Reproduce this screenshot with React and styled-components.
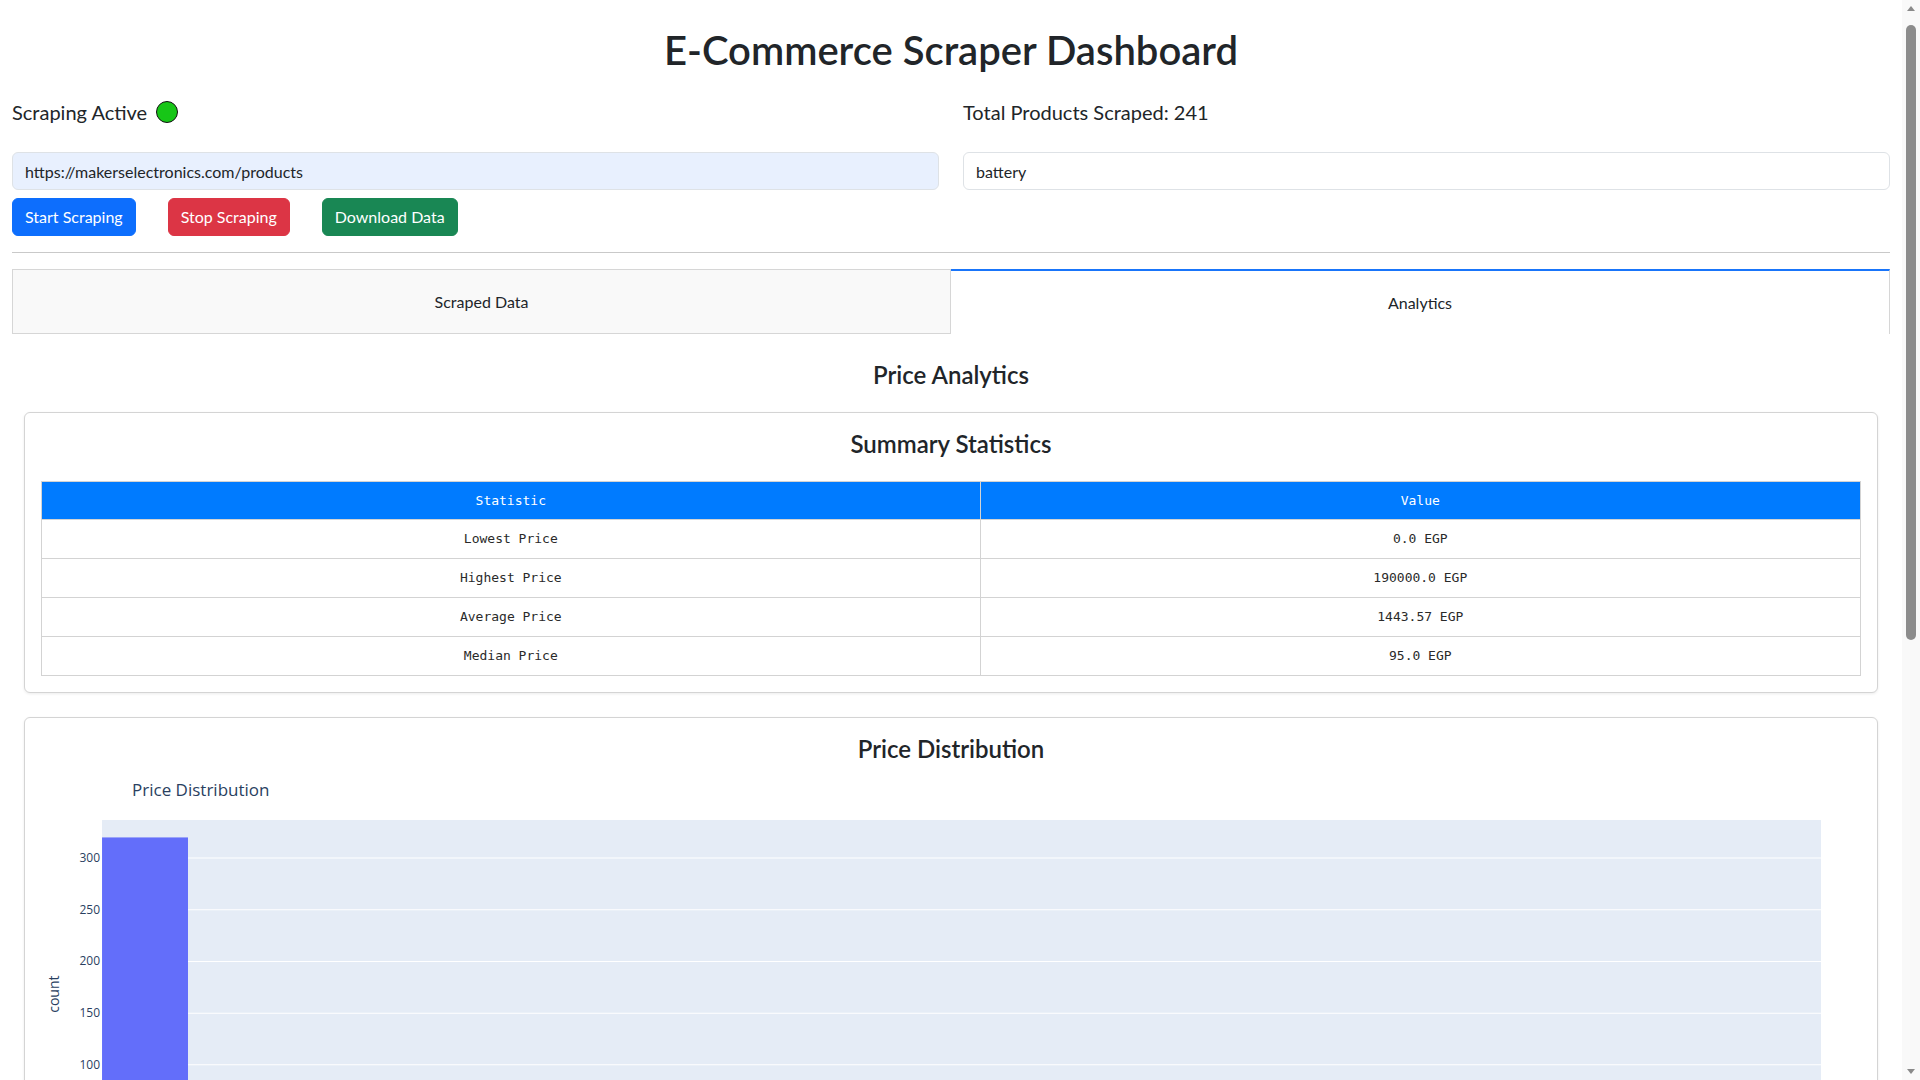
import React from "react";
import styled, { createGlobalStyle } from "styled-components";

const GlobalStyle = createGlobalStyle`
  html, body { margin: 0; padding: 0; background: #ffffff; overflow: hidden; }
  body {
    font-family: Lato, "Liberation Sans", Arial, sans-serif;
    font-size: 16px;
    line-height: 1.5;
    color: #212529;
  }
  *, *::before, *::after { box-sizing: border-box; }
`;

const Shell = styled.div`
  display: flex;
  height: 100vh;
  overflow: hidden;
`;

const Page = styled.main`
  flex: 1;
  min-width: 0;
  overflow: hidden;
  padding: 0 12px;
`;

const ScrollTrack = styled.div`
  width: 18px;
  flex: none;
  display: flex;
  flex-direction: column;
  align-items: center;
  background: #f9f9f9;
`;

const ArrowBtn = styled.div`
  height: 17px;
  width: 100%;
  display: flex;
  align-items: center;
  justify-content: center;
  &::before {
    content: "";
    width: 0;
    height: 0;
    border-left: 4px solid transparent;
    border-right: 4px solid transparent;
    ${(p) =>
      p.$down ? "border-top: 5px solid #8a8a8a;" : "border-bottom: 5px solid #8a8a8a;"}
  }
`;

const Thumb = styled.div`
  margin-top: 8px;
  width: 10px;
  height: 615px;
  border-radius: 5px;
  background: #8c8c8c;
`;

const TrackFill = styled.div`
  flex: 1;
`;

const Title = styled.h1`
  margin: 26px 0 0;
  font-size: 40px;
  line-height: 48px;
  font-weight: 600;
  text-align: center;
`;

const TopGrid = styled.div`
  display: grid;
  grid-template-columns: 1fr 1fr;
  column-gap: 24px;
  margin-top: 23px;
`;

const Column = styled.div`
  display: flex;
  flex-direction: column;
`;

const StatusLine = styled.div`
  display: flex;
  align-items: center;
  gap: 9px;
  font-size: 20px;
  line-height: 30px;
  height: 30px;
`;

const Dot = styled.span`
  width: 22px;
  height: 22px;
  border-radius: 50%;
  background: #17c617;
  border: 1px solid #111;
  display: inline-block;
`;

const TextInput = styled.input`
  margin-top: 25px;
  height: 38px;
  width: 100%;
  padding: 6px 12px;
  font-family: inherit;
  font-size: 16px;
  color: #212529;
  background: ${(p) => (p.$filled ? "#e8f0fe" : "#ffffff")};
  border: 1px solid #dee2e6;
  border-radius: 6px;
  outline: none;
`;

const ButtonRow = styled.div`
  display: flex;
  gap: 32px;
  margin-top: 8px;
`;

const Button = styled.button`
  height: 38px;
  padding: 6px 12px;
  font-family: inherit;
  font-size: 16px;
  line-height: 24px;
  color: #ffffff;
  background: ${(p) => p.$bg};
  border: 1px solid ${(p) => p.$bg};
  border-radius: 6px;
  cursor: pointer;
`;

const Rule = styled.hr`
  margin: 16px 0;
  border: 0;
  border-top: 1px solid #c9c9c9;
`;

const Tabs = styled.div`
  display: grid;
  grid-template-columns: 1fr 1fr;
`;

const Tab = styled.div`
  height: 65px;
  display: flex;
  align-items: center;
  justify-content: center;
  font-size: 16px;
  color: #212529;
  background: ${(p) => (p.$active ? "#ffffff" : "#f9f9f9")};
  border: 1px solid #d6d6d6;
  border-top: ${(p) => (p.$active ? "2px solid #1975fa" : "1px solid #d6d6d6")};
  border-bottom: ${(p) => (p.$active ? "none" : "1px solid #d6d6d6")};
  border-left: ${(p) => (p.$active ? "none" : "1px solid #d6d6d6")};
`;

const SectionTitle = styled.h4`
  margin: 26px 0 0;
  font-size: 24px;
  line-height: 29px;
  font-weight: 600;
  text-align: center;
`;

const Card = styled.div`
  margin: ${(p) => p.$top}px 12px 0;
  padding: 16px;
  border: 1px solid #d4d4d4;
  border-radius: 6px;
  background: #ffffff;
  box-shadow: 0 1px 3px rgba(0, 0, 0, 0.08);
`;

const CardTitle = styled.h4`
  margin: 0 0 ${(p) => p.$gap}px;
  font-size: 24px;
  line-height: 29px;
  font-weight: 600;
  text-align: center;
`;

const Table = styled.table`
  width: 100%;
  border-collapse: collapse;
  font-family: "DejaVu Sans Mono", "Liberation Mono", monospace;
  font-size: 13px;
  color: #2a2a2a;
`;

const Th = styled.th`
  height: 38px;
  background: #007bff;
  color: #ffffff;
  font-weight: 400;
  border: 1px solid #d3d3d3;
  text-align: center;
  width: ${(p) => p.$w || "auto"};
`;

const Td = styled.td`
  height: 39px;
  border: 1px solid #d3d3d3;
  text-align: center;
`;

const ChartSvg = styled.svg`
  display: block;
  width: 100%;
  height: auto;
  font-family: "Open Sans", Verdana, Arial, sans-serif;
`;

const stats = [
  ["Lowest Price", "0.0 EGP"],
  ["Highest Price", "190000.0 EGP"],
  ["Average Price", "1443.57 EGP"],
  ["Median Price", "95.0 EGP"],
];

const PLOT = { x0: 61, x1: 1779, y0: 50, y1: 398 };
const MAXV = 336.84;
const bins = [320, 6, 3, 2, 1, 0, 1, 0, 0, 1, 0, 0, 0, 0, 0, 0, 0, 0, 1, 0];

function yFor(v) {
  return PLOT.y1 - (v / MAXV) * (PLOT.y1 - PLOT.y0);
}

function PriceChart() {
  const w = (PLOT.x1 - PLOT.x0) / 20;
  const ticks = [0, 50, 100, 150, 200, 250, 300];
  const xticks = [0, 50, 100, 150, 200];
  return (
    <ChartSvg viewBox="0 0 1819 460">
      <text x="91" y="26" fontSize="17" fill="#2a3f5f">Price Distribution</text>
      <rect x={PLOT.x0} y={PLOT.y0} width={PLOT.x1 - PLOT.x0} height={PLOT.y1 - PLOT.y0} fill="#e5ecf6" />
      {ticks.map((t) => (
        <line key={t} x1={PLOT.x0} x2={PLOT.x1} y1={yFor(t)} y2={yFor(t)} stroke="#ffffff" strokeWidth={t === 0 ? 2 : 1} />
      ))}
      {bins.map((b, i) =>
        b > 0 ? (
          <rect key={i} x={PLOT.x0 + i * w} y={yFor(b)} width={w} height={PLOT.y1 - yFor(b)} fill="#636efa" />
        ) : null
      )}
      {ticks.map((t) => (
        <text key={"l" + t} x={PLOT.x0 - 2} y={yFor(t) + 4} fontSize="12" textAnchor="end" fill="#2a3f5f">{t}</text>
      ))}
      {xticks.map((t, i) => (
        <text key={"xl" + t} x={PLOT.x0 + i * 5 * w} y={PLOT.y1 + 18} fontSize="12" textAnchor="middle" fill="#2a3f5f">
          {t === 0 ? "0" : `${t}k`}
        </text>
      ))}
      <text x={PLOT.x0 + (PLOT.x1 - PLOT.x0) / 2} y={PLOT.y1 + 46} fontSize="14" textAnchor="middle" fill="#2a3f5f">price</text>
      <text transform={`translate(18 ${(PLOT.y0 + PLOT.y1) / 2}) rotate(-90)`} fontSize="14" textAnchor="middle" fill="#2a3f5f">count</text>
    </ChartSvg>
  );
}

export default function App() {
  return (
    <>
      <GlobalStyle />
      <Shell>
        <Page>
          <Title>E-Commerce Scraper Dashboard</Title>
          <TopGrid>
            <Column>
              <StatusLine>
                Scraping Active <Dot />
              </StatusLine>
              <TextInput $filled defaultValue="https://makerselectronics.com/products" />
              <ButtonRow>
                <Button $bg="#0d6efd">Start Scraping</Button>
                <Button $bg="#dc3545">Stop Scraping</Button>
                <Button $bg="#198754">Download Data</Button>
              </ButtonRow>
            </Column>
            <Column>
              <StatusLine>Total Products Scraped: 241</StatusLine>
              <TextInput defaultValue="battery" />
            </Column>
          </TopGrid>
          <Rule />
          <Tabs>
            <Tab>Scraped Data</Tab>
            <Tab $active>Analytics</Tab>
          </Tabs>
          <SectionTitle>Price Analytics</SectionTitle>
          <Card $top={23}>
            <CardTitle $gap={23}>Summary Statistics</CardTitle>
            <Table>
              <thead>
                <tr>
                  <Th $w="51.6%">Statistic</Th>
                  <Th>Value</Th>
                </tr>
              </thead>
              <tbody>
                {stats.map(([k, v]) => (
                  <tr key={k}>
                    <Td>{k}</Td>
                    <Td>{v}</Td>
                  </tr>
                ))}
              </tbody>
            </Table>
          </Card>
          <Card $top={24}>
            <CardTitle $gap={7}>Price Distribution</CardTitle>
            <PriceChart />
          </Card>
        </Page>
        <ScrollTrack aria-hidden="true">
          <ArrowBtn />
          <Thumb />
          <TrackFill />
          <ArrowBtn $down />
        </ScrollTrack>
      </Shell>
    </>
  );
}
